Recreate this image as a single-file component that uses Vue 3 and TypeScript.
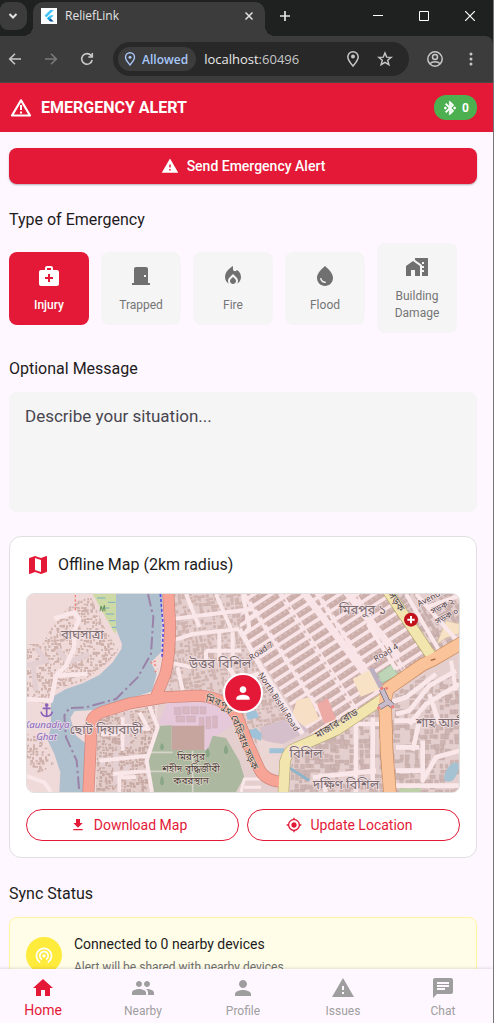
<script setup lang="ts">
import { ref } from 'vue'

const icons = {
  warning: 'M1 21h22L12 2 1 21zm12-3h-2v-2h2v2zm0-4h-2v-4h2v4z',
  bluetooth:
    'M7 12l-2-2-2 2 2 2 2-2zm10.71-4.29L12 2h-1v7.59L6.41 5 5 6.41 10.59 12 5 17.59 6.41 19 11 14.41V22h1l5.71-5.71-4.3-4.29 4.3-4.29zM13 5.83l1.88 1.88L13 9.59V5.83zm1.88 10.46L13 18.17v-3.76l1.88 1.88zM19 10l-2 2 2 2 2-2-2-2z',
  medical:
    'M20 6h-4V4c0-1.1-.9-2-2-2h-4c-1.1 0-2 .9-2 2v2H4c-1.1 0-2 .9-2 2v12c0 1.1.9 2 2 2h16c1.1 0 2-.9 2-2V8c0-1.1-.9-2-2-2zM10 4h4v2h-4V4zm6 11h-3v3h-2v-3H8v-2h3v-3h2v3h3v2z',
  door: 'M19 19V5c0-1.1-.9-2-2-2H7c-1.1 0-2 .9-2 2v14H3v2h18v-2h-2zm-2-6h-2v-2h2v2z',
  fire: 'M12 12.9l-2.13 2.09C9.31 15.55 9 16.28 9 17.06 9 18.68 10.35 20 12 20s3-1.32 3-2.94c0-.78-.31-1.52-.87-2.07L12 12.9z M16 6l-.44.55C14.38 8.02 12 7.19 12 5.3V2S4 6 4 13c0 2.92 1.56 5.47 3.89 6.86-.56-.79-.89-1.76-.89-2.8 0-1.32.52-2.56 1.47-3.5L12 10.1l3.53 3.47c.95.93 1.47 2.17 1.47 3.5 0 1.02-.31 1.96-.85 2.75 1.89-1.15 3.29-3.06 3.71-5.3.66-3.55-1.07-6.9-3.86-8.52z',
  drop: 'M12 2c-5.33 4.55-8 8.48-8 11.8 0 4.98 3.8 8.2 8 8.2s8-3.22 8-8.2c0-3.32-2.67-7.25-8-11.8zm-4.17 12c.37 0 .67.26.74.62.41 2.22 2.28 2.98 3.64 2.87.43-.02.79.32.79.75 0 .4-.32.73-.72.75-2.13.13-4.62-1.09-5.19-4.12-.08-.45.28-.87.74-.87z',
  building: 'M1 11v10h5v-6h4v6h5V11L8 6z M10 3v1.97l7 5V11h2v2h-2v2h2v2h-2v4h6V3H10zm9 6h-2V7h2v2z',
  map: 'M20.5 3l-.16.03L15 5.1 9 3 3.36 4.9c-.21.07-.36.25-.36.48V20.5c0 .28.22.5.5.5l.16-.03L9 18.9l6 2.1 5.64-1.9c.21-.07.36-.25.36-.48V3.5c0-.28-.22-.5-.5-.5zM15 19l-6-2.11V5l6 2.11V19z',
  person: 'M12 12c2.21 0 4-1.79 4-4s-1.79-4-4-4-4 1.79-4 4 1.79 4 4 4zm0 2c-2.67 0-8 1.34-8 4v2h16v-2c0-2.66-5.33-4-8-4z',
  download: 'M19 9h-4V3H9v6H5l7 7 7-7zM5 18v2h14v-2H5z',
  locate:
    'M12 8c-2.21 0-4 1.79-4 4s1.79 4 4 4 4-1.79 4-4-1.79-4-4-4zm8.94 3c-.46-4.17-3.77-7.48-7.94-7.94V1h-2v2.06C6.83 3.52 3.52 6.83 3.06 11H1v2h2.06c.46 4.17 3.77 7.48 7.94 7.94V23h2v-2.06c4.17-.46 7.48-3.77 7.94-7.94H23v-2h-2.06zM12 19c-3.87 0-7-3.13-7-7s3.13-7 7-7 7 3.13 7 7-3.13 7-7 7z',
  tethering:
    'M12 11c-1.1 0-2 .9-2 2s.9 2 2 2 2-.9 2-2-.9-2-2-2zm6 2c0-3.31-2.69-6-6-6s-6 2.69-6 6c0 2.22 1.21 4.15 3 5.19l1-1.74c-1.19-.7-2-1.97-2-3.45 0-2.21 1.79-4 4-4s4 1.79 4 4c0 1.48-.81 2.75-2 3.45l1 1.74c1.79-1.04 3-2.97 3-5.19zM12 3C6.48 3 2 7.48 2 13c0 3.7 2.01 6.92 4.99 8.65l1-1.73C5.61 18.53 4 15.96 4 13c0-4.42 3.58-8 8-8s8 3.58 8 8c0 2.96-1.61 5.53-4 6.92l1 1.73c2.99-1.73 5-4.95 5-8.65 0-5.52-4.48-10-10-10z',
  home: 'M10 20v-6h4v6h5v-8h3L12 3 2 12h3v8z',
  people:
    'M16 11c1.66 0 2.99-1.34 2.99-3S17.66 5 16 5c-1.66 0-3 1.34-3 3s1.34 3 3 3zm-8 0c1.66 0 2.99-1.34 2.99-3S9.66 5 8 5C6.34 5 5 6.34 5 8s1.34 3 3 3zm0 2c-2.33 0-7 1.17-7 3.5V19h14v-2.5c0-2.33-4.67-3.5-7-3.5zm8 0c-.29 0-.62.02-.97.05 1.16.84 1.97 1.97 1.97 3.45V19h6v-2.5c0-2.33-4.67-3.5-7-3.5z',
  chat: 'M20 2H4c-1.1 0-1.99.9-1.99 2L2 22l4-4h14c1.1 0 2-.9 2-2V4c0-1.1-.9-2-2-2zM6 9h12v2H6V9zm8 5H6v-2h8v2zm4-6H6V6h12v2z',
}

interface Entry {
  label: string
  icon: string
}

const kinds: Entry[] = [
  { label: 'Injury', icon: icons.medical },
  { label: 'Trapped', icon: icons.door },
  { label: 'Fire', icon: icons.fire },
  { label: 'Flood', icon: icons.drop },
  { label: 'Building Damage', icon: icons.building },
]
const selectedKind = ref('Injury')
const message = ref('')

const tabs: Entry[] = [
  { label: 'Home', icon: icons.home },
  { label: 'Nearby', icon: icons.people },
  { label: 'Profile', icon: icons.person },
  { label: 'Issues', icon: icons.warning },
  { label: 'Chat', icon: icons.chat },
]
const activeTab = ref('Home')

// Deterministic scatter of small building footprints, returned as one path.
function scatter(seed: number, x0: number, y0: number, x1: number, y1: number, step: number, density: number): string {
  let s = seed
  const rnd = () => {
    s = (s * 16807) % 2147483647
    return s / 2147483647
  }
  let d = ''
  for (let y = y0; y < y1; y += step) {
    for (let x = x0; x < x1; x += step) {
      if (rnd() > density) continue
      const w = Math.round(step * (0.5 + rnd() * 0.6))
      const h = Math.round(step * (0.5 + rnd() * 0.6))
      d += `M${x + Math.round(rnd() * 4)} ${y + Math.round(rnd() * 4)}h${w}v${h}h${-w}z`
    }
  }
  return d
}

// Regular city blocks: long thin bars separated by narrow streets.
function blocks(x0: number, y0: number, x1: number, y1: number, w: number, h: number, gapX: number, gapY: number): string {
  let d = ''
  for (let x = x0; x < x1; x += w + gapX) {
    for (let y = y0; y < y1; y += h + gapY) d += `M${x} ${y}h${w}v${h}h${-w}z`
  }
  return d
}

const westBuildings = scatter(11, 0, 0, 300, 560, 9, 0.62)
const southBuildings = scatter(29, 200, 320, 400, 600, 9, 0.74)
const northBuildings = scatter(47, 420, -20, 900, 460, 12, 0.72)
const eastBuildings = scatter(83, 760, 240, 1310, 600, 15, 0.7)
const cornerBuildings = scatter(61, 1080, -20, 1310, 300, 15, 0.72)
const gridBlocks = blocks(-700, -700, 800, 700, 78, 17, 15, 11)
const gridDetail = blocks(-700, -700, 800, 700, 8, 8, 9, 20)
</script>

<template>
  <div class="window">
    <div class="tabstrip">
      <button class="tab-search" aria-label="Search tabs">
        <svg width="10" height="10" viewBox="0 0 10 10"><path d="M1.5 3L5 6.500 8.500 3" fill="none" stroke="currentColor" stroke-width="2" /></svg>
      </button>
      <div class="tab">
        <svg class="favicon" width="16" height="16" viewBox="0 0 16 16">
          <rect width="16" height="16" fill="#fff" />
          <path d="M9.200 2h3.600L5.400 9.400 3.600 7.600z" fill="#47c5fb" />
          <path d="M9.200 7.200h3.600L9.600 10.400 7.800 8.600z" fill="#47c5fb" />
          <path d="M6 10.400l1.800-1.800 1.800 1.800-1.800 1.800z" fill="#00a8ee" />
          <path d="M7.800 12.200l1.800-1.800 3.200 3.200H9.200z" fill="#0b5394" />
        </svg>
        <span class="tab-title">ReliefLink</span>
        <button class="bare" aria-label="Close tab">
          <svg width="8" height="8" viewBox="0 0 8 8"><path d="M.5.5l7 7M7.500.5l-7 7" stroke="currentColor" stroke-width="1.500" /></svg>
        </button>
      </div>
      <button class="bare new-tab" aria-label="New tab">
        <svg width="12" height="12" viewBox="0 0 12 12"><path d="M6 1v10M1 6h10" stroke="currentColor" stroke-width="1.700" /></svg>
      </button>
      <div class="window-controls">
        <button class="bare" aria-label="Minimize"><svg width="10" height="10" viewBox="0 0 10 10"><path d="M0 4.500h10" stroke="currentColor" /></svg></button>
        <button class="bare" aria-label="Maximize"><svg width="10" height="10" viewBox="0 0 10 10"><path d="M.5.5h9v9h-9z" fill="none" stroke="currentColor" /></svg></button>
        <button class="bare" aria-label="Close"><svg width="10" height="10" viewBox="0 0 10 10"><path d="M0 0l10 10M10 0L0 10" stroke="currentColor" stroke-width="1.200" /></svg></button>
      </div>
    </div>

    <div class="toolbar">
      <div class="nav-buttons">
        <button class="bare" aria-label="Back"><svg width="16" height="16" viewBox="0 0 16 16"><path d="M14 8H3M8 2.700L2.700 8 8 13.300" fill="none" stroke="currentColor" stroke-width="1.600" /></svg></button>
        <button class="bare dim" aria-label="Forward"><svg width="16" height="16" viewBox="0 0 16 16"><path d="M2 8h11M8 2.700L13.300 8 8 13.300" fill="none" stroke="currentColor" stroke-width="1.600" /></svg></button>
        <button class="bare" aria-label="Reload"><svg width="16" height="16" viewBox="0 0 16 16"><path d="M13.200 9A5.300 5.300 0 1 1 12 4.400l1.200 1.300M13.300 2v4h-4" fill="none" stroke="currentColor" stroke-width="1.600" /></svg></button>
      </div>
      <div class="omnibox">
        <button class="chip">
          <svg width="12" height="14" viewBox="0 0 12 14"><path d="M6 13C3.500 10 1.500 7.800 1.500 5.300a4.500 4.500 0 0 1 9 0C10.500 7.800 8.500 10 6 13z" fill="none" stroke="currentColor" stroke-width="1.400" /><circle cx="6" cy="5.300" r="1.500" fill="currentColor" /></svg>
          Allowed
        </button>
        <span class="url">localhost<span class="port">:60496</span></span>
        <button class="bare" aria-label="Location access"><svg width="16" height="18" viewBox="0 0 16 18"><path d="M8 16C5 12.500 2.800 10.100 2.800 7a5.200 5.200 0 0 1 10.400 0c0 3.100-2.200 5.500-5.200 9z" fill="none" stroke="currentColor" stroke-width="1.500" /><circle cx="8" cy="6.500" r="2" fill="currentColor" /></svg></button>
        <button class="bare" aria-label="Bookmark"><svg width="16" height="16" viewBox="0 0 16 16"><path d="M8 1.900l1.700 4.200 4.500.3-3.500 2.900 1.200 4.400L8 11.300l-3.900 2.400 1.200-4.400-3.500-2.900 4.500-.3z" fill="none" stroke="currentColor" stroke-width="1.400" /></svg></button>
      </div>
      <button class="bare profile" aria-label="Profile"><svg width="18" height="18" viewBox="0 0 18 18"><g fill="none" stroke="currentColor" stroke-width="1.500"><circle cx="9" cy="9" r="7.200" /><circle cx="9" cy="7" r="2.500" /><path d="M3.800 13.800c2.600-2.600 7.800-2.600 10.400 0" /></g></svg></button>
      <button class="bare" aria-label="Menu"><svg width="4" height="16" viewBox="0 0 4 16" fill="currentColor"><circle cx="2" cy="3" r="1.500" /><circle cx="2" cy="8" r="1.500" /><circle cx="2" cy="13" r="1.500" /></svg></button>
    </div>

    <div class="viewport">
      <div class="app">
        <header class="appbar">
          <svg width="24" height="24" viewBox="0 0 24 24" fill="currentColor"><path d="M12 4.300L21 19.500H3z" fill="none" stroke="currentColor" stroke-width="2.200" stroke-linejoin="round" /><path d="M11 9h2v5h-2zM11 15.500h2v2h-2z" /></svg>
          <h1>EMERGENCY ALERT</h1>
          <span class="badge"><svg width="16" height="16" viewBox="0 0 24 24" fill="currentColor"><path :d="icons.bluetooth" stroke="currentColor" /></svg>0</span>
        </header>

        <main class="content">
          <button class="send">
            <svg width="18" height="18" viewBox="0 0 24 24" fill="currentColor"><path :d="icons.warning" /></svg>
            Send Emergency Alert
          </button>

          <h2>Type of Emergency</h2>
          <div class="kinds">
            <button
              v-for="kind in kinds"
              :key="kind.label"
              class="kind"
              :class="{ selected: kind.label === selectedKind }"
              :aria-pressed="kind.label === selectedKind"
              @click="selectedKind = kind.label"
            >
              <svg width="24" height="24" viewBox="0 0 24 24" fill="currentColor"><path :d="kind.icon" /></svg>
              <span>{{ kind.label }}</span>
            </button>
          </div>

          <h2><label for="message">Optional Message</label></h2>
          <textarea id="message" v-model="message" placeholder="Describe your situation..."></textarea>

          <section class="map-card">
            <h3>
              <svg width="24" height="24" viewBox="0 0 24 24" fill="currentColor"><path :d="icons.map" /></svg>
              Offline Map (2km radius)
            </h3>
            <div class="map">
              <svg class="tiles" viewBox="3 0 1296 594" preserveAspectRatio="xMidYMid slice" role="img" aria-label="Map of the surrounding area">
                <defs>
                  <clipPath id="west"><path d="M150 20L195 10 240 110 278 170 235 215 170 262 90 285 60 330 0 320V150L50 150 90 75zM0 420L50 430 85 510 40 540 0 500z" /></clipPath>
                  <clipPath id="south"><path d="M215 372L385 335 392 400 362 500 375 594H210z" /></clipPath>
                  <clipPath id="north"><path d="M440 0H700L705 120 660 140 740 300 830 410 770 450 690 450 640 350 560 290H425z" /></clipPath>
                  <clipPath id="grid"><path d="M655 -10H1080L1215 190 1070 290 950 395 850 420 640 100z" /></clipPath>
                  <clipPath id="southeast"><path d="M790 594L800 480 1070 320 1300 180V594z" /></clipPath>
                  <clipPath id="corner"><path d="M1110 0H1302V140L1230 180z" /></clipPath>
                  <path id="embankment" d="M519 320C575 328 605 345 620 385S655 480 688 545" />
                </defs>

                <rect width="1302" height="600" fill="#f0dad9" />
                <path d="M437 0H1302V594H380L395 330 430 250z" fill="#e4cfce" />
                <path d="M200 0H270V120L262 112z" fill="#cddaa6" />
                <path d="M213 12h25M246 25h22M225 42h25M240 60h24M250 80h18M258 100h12" stroke="#78acc5" stroke-width="3" />
                <path d="M222 52l3-16 5 16 5-18 2 18" stroke="#679258" stroke-width="3" fill="none" />
                <path d="M270 0H410L405 175 375 205 392 240 378 292 320 312 262 327 200 348 145 352 133 372 150 425 182 450 182 594H100L103 535 85 480 66 440 74 400 75 330 85 305 120 285 170 268 220 243 260 205 286 165 288 150 270 105z" fill="#aebfce" />

                <g clip-path="url(#west)"><path :d="westBuildings" fill="#cfb2ac" /></g>
                <g clip-path="url(#south)"><rect x="190" y="320" width="220" height="280" fill="#e3cdca" /><path :d="southBuildings" fill="#c8aaa5" /></g>
                <g clip-path="url(#north)"><path :d="northBuildings" fill="#cfb4b0" transform="rotate(-8 600 200)" /></g>
                <g clip-path="url(#southeast)"><path :d="eastBuildings" fill="#cdb4b1" stroke="#c0a6a4" stroke-width="1" /></g>
                <g clip-path="url(#corner)"><path :d="cornerBuildings" fill="#cbb1ae" stroke="#bfa5a3" stroke-width="1" transform="rotate(-30 1200 100)" /></g>

                <g clip-path="url(#grid)">
                  <rect x="600" y="-10" width="700" height="500" fill="#f9e4e8" />
                  <g transform="translate(850 200) rotate(-33)"><path :d="gridBlocks" fill="#ccaeaa" /><path :d="gridDetail" fill="#d6bdba" /></g>
                  <path d="M830 -10L1060 295M950 -20L1120 190" stroke="#f9e4e8" stroke-width="22" />
                </g>
                <path d="M812 318L850 310 880 375 830 400 800 360z" fill="#f6dfc4" />
                <path d="M800 370L850 410 770 450 725 470 700 400z" fill="#d4bfca" />
                <path d="M980 255L1030 228 1062 285 1005 308z" fill="#f8e2c6" />
                <path d="M1055 240L1098 210 1116 243 1068 267z" fill="#bfd5b7" stroke="#96b48f" stroke-width="2" />
                <path d="M873 330L905 312 930 375 895 390z" fill="#eda9a4" />
                <path d="M1232 150L1260 80 1300 90V118L1260 132z" fill="#f8e2c6" stroke="#d6c3a3" stroke-width="2" />

                <path d="M425 325H590L625 390 570 425 550 470H437V395L395 390z" fill="#e5c8da" />
                <g fill="#d8b6c2" stroke="#c3a3ae" stroke-width="1">
                  <path d="M445 340h20v22h-20zM470 338h20v22h-20zM495 338h22v22h-22zM522 338h18v22h-18zM450 366h26v18h-26zM482 366h26v18h-26zM520 370h14v36h-14zM540 368h14v36h-14zM560 366h14v36h-14z" />
                </g>
                <path d="M395 396L437 394V468H545L560 425 600 432 640 500 655 550 630 594H375L362 520z" fill="#adb8a0" />
                <path d="M437 395h98v73h-98z" fill="#c5a59e" />
                <path d="M370 475H440M362 532H455M500 470V594" stroke="#d6d3c8" stroke-width="5" />
                <path d="M408 468c-10-2-4-18 0-20 4 2 10 18 0 20zM408 574c-10-2-4-26 0-28 4 2 10 26 0 28zM600 480c-12-2-4-24 0-28 4 4 12 26 0 28zM545 490c-12-2-4-24 0-28 4 4 12 26 0 28z" fill="#88a586" />
                <path d="M690 432L735 445 770 450 775 505 745 560 712 520z" fill="#ecd6d3" />
                <path d="M660 350L690 350 700 370 665 378zM667 410L690 402 708 420 705 440 675 430zM730 463h44v15h-44z" fill="#9fc2d8" />
                <path d="M780 515L850 560" stroke="#8bb5cd" stroke-width="8" />
                <path d="M1255 548c5-30 30-50 40-40s-5 50-20 54-25-5-20-14z" fill="#a4c2d2" />
                <path d="M1120 583h64v14h-64z" fill="#bdd0a8" />

                <g fill="none" stroke="#e4d0d2" stroke-width="16">
                  <path d="M0 215L60 200 30 160M20 210L30 290M95 165L125 205 190 180" />
                  <path d="M230 490V520M270 470V560L310 515M305 350V460" />
                </g>
                <g fill="none" stroke="#fae7ea" stroke-width="12" stroke-linejoin="round">
                  <path d="M85 74L145 55 160 75 145 110V160L120 215 90 245 75 320 0 315M90 245L185 240" stroke-width="14" />
                  <path d="M0 545L55 565 75 594" />
                  <path d="M225 420H270L300 395 365 405M290 370V470M340 355L370 410M220 500L365 485M260 540L370 530M280 594V550H330M370 335L395 400 362 500 378 594" />
                  <path d="M440 140L500 120 640 105M440 75L680 45M480 0L520 100M570 0L615 105M650 0L670 100 655 120M430 205L500 220M455 220L470 290M540 170H645M540 170V205M580 115V205M620 115V205" />
                  <path d="M640 105L705 220 830 420M590 190L640 270M700 240L650 255M700 55L660 80" stroke-width="15" />
                  <path d="M645 594L655 555H740M655 580H705" stroke-width="9" />
                  <path d="M990 390V594M1040 370V560M985 390H1060M1105 380H1180L1160 470M1110 460H1180M1190 440V560L1230 490 1300 470M1110 530H1190M860 550L1050 530M900 594L880 540M1110 360L1150 350 1210 275 1290 230M1150 390L1200 330 1300 270M1080 330L1140 310 1230 240M1210 300L1240 390M1110 575H1300" stroke-width="14" />
                  <path d="M1140 0L1240 170M1170 0L1302 150M1200 40L1300 5M1275 200L1290 290" />
                  <path d="M1025 90L1110 225" />
                </g>

                <g fill="none" stroke-linejoin="round">
                  <path d="M187 600L194 453 195 395Q195 365 232 353L312 328 417 310 517 305Q590 308 632 363L667 453 700 525Q715 560 772 565M427 0L432 90Q432 190 417 243L387 315" stroke="#cf857c" stroke-width="36" />
                  <path d="M772 600L777 503Q785 470 807 463L932 408 1075 312M1085 -10L1222 195" stroke="#b8a978" stroke-width="34" />
                  <path d="M1092 600L1082 473 1077 318 1085 285 1190 212 1222 197 1310 145" stroke="#c98b5d" stroke-width="40" />
                  <path d="M187 600L194 453 195 395Q195 365 232 353L312 328 417 310 517 305Q590 308 632 363L667 453 700 525Q715 560 772 565M427 0L432 90Q432 190 417 243L387 315" stroke="#f7a395" stroke-width="32" stroke-linecap="round" />
                  <path d="M772 600L777 503Q785 470 807 463L932 408 1075 312M1085 -10L1222 195" stroke="#f2e5ad" stroke-width="30" />
                  <path d="M1092 600L1082 473 1077 318 1085 285 1190 212 1222 197 1310 145" stroke="#fac399" stroke-width="36" />
                  <path d="M403 0L412 100 408 190" stroke="#5a4fe0" stroke-width="5" stroke-dasharray="9 6" />
                  <path d="M366 0L382 70 375 180 335 250 270 315 180 340 130 342 115 365 120 430 152 500 160 594" stroke="#9a83a8" stroke-width="6" stroke-dasharray="38 10 7 10" />
                  <path d="M1035 222L1065 280" stroke="#bbb0c2" stroke-width="14" />
                  <path d="M1067 285L1085 325L1060 340M1085 322L1100 336" stroke="#6b6376" stroke-width="17" />
                  <path d="M1067 285L1085 325L1060 340M1085 322L1100 336" stroke="#c9bcca" stroke-width="13" />
                  <path d="M148 3V50M390 215l-15-10 15-4M386 235l10-10" stroke="#f08478" stroke-width="4" stroke-dasharray="7 6" />
                  <path d="M1214 199l14-4" stroke="#a76a43" stroke-width="4" />
                </g>
                <g fill="#ef7f7f"><circle cx="1058" cy="342" r="5" /><circle cx="1100" cy="338" r="5" /><circle cx="1067" cy="283" r="5" /><circle cx="1082" cy="283" r="4" /></g>

                <g fill="none" stroke="#8a63b8" stroke-width="5"><path d="M62 336V367M50 343H74M45 353Q48 367 62 367T79 353" /><circle cx="62" cy="333" r="3" /></g>
                <circle cx="1155" cy="77" r="21" fill="#c2121c" />
                <path d="M1155 66v22M1144 77h22" stroke="#fff" stroke-width="6" />

                <g class="place">
                  <text x="169" y="136">বাঘসাত্রা</text>
                  <text x="240" y="420">ছোট দিয়াবাড়ী</text>
                  <text x="582" y="221">উত্তর বিশিল</text>
                  <text x="1010" y="60">মিরপুর ১</text>
                  <text x="840" y="492">বিশিল</text>
                  <text x="960" y="584">দক্ষিণ বিশিল</text>
                  <text x="1246" y="400">শাহ আলী</text>
                </g>
                <g class="dark">
                  <text x="495" y="499">মিরপুর</text>
                  <text x="495" y="534">শহীদ বুদ্ধিজীবী</text>
                  <text x="495" y="570">কবরস্থান</text>
                  <text transform="translate(936 397) rotate(-31)">মাজার রোড</text>
                  <text transform="translate(1103 28) rotate(57)">সড়ক</text>
                  <text><textPath href="#embankment" startOffset="50%">মিরপুর বেড়িবাধ সড়ক</textPath></text>
                </g>
                <g class="street">
                  <text transform="translate(710 178) rotate(-33)">Road 7</text>
                  <text transform="translate(751 328) rotate(57)">North Bishil Road</text>
                  <text transform="translate(1084 183) rotate(-31)">Road 4</text>
                  <text transform="translate(1218 18) rotate(-28)">Avenue</text>
                  <text transform="translate(1253 44) rotate(-28)">সড়ক ২</text>
                  <text transform="translate(1266 74) rotate(-28)">সড়ক ০</text>
                </g>
                <g class="ferry">
                  <text x="62" y="403">Kaunadiya</text>
                  <text x="62" y="437">Ghat</text>
                </g>
              </svg>
              <span class="marker"><svg width="20" height="20" viewBox="0 0 24 24" fill="currentColor"><path :d="icons.person" /></svg></span>
            </div>
            <div class="map-actions">
              <button><svg width="16" height="16" viewBox="0 0 24 24" fill="currentColor"><path :d="icons.download" /></svg>Download Map</button>
              <button><svg width="16" height="16" viewBox="0 0 24 24" fill="currentColor"><path :d="icons.locate" /></svg>Update Location</button>
            </div>
          </section>

          <h2>Sync Status</h2>
          <section class="sync">
            <span class="sync-icon"><svg width="20" height="20" viewBox="0 0 24 24" fill="currentColor"><path :d="icons.tethering" /></svg></span>
            <div>
              <p class="sync-title">Connected to 0 nearby devices</p>
              <p class="sync-note">Alert will be shared with nearby devices</p>
            </div>
          </section>
        </main>

        <nav class="bottom">
          <button
            v-for="tab in tabs"
            :key="tab.label"
            :class="{ active: tab.label === activeTab }"
            @click="activeTab = tab.label"
          >
            <svg width="24" height="24" viewBox="0 0 24 24" fill="currentColor"><path :d="tab.icon" /></svg>
            <span>{{ tab.label }}</span>
          </button>
        </nav>
      </div>
    </div>
  </div>
</template>

<style>
body {
  background: #fef7ff;
}
</style>

<style scoped>
* {
  box-sizing: border-box;
}
button {
  font: inherit;
  border: 0;
  cursor: pointer;
}
svg {
  display: block;
  flex: none;
}
h1,
h2,
h3,
p {
  margin: 0;
  font-weight: 400;
}
.window {
  display: flex;
  flex-direction: column;
  height: 100vh;
  border-right: 1px solid #777;
  overflow: hidden;
  background: #1f2120;
  font-family: Roboto, "Noto Sans", sans-serif;
}

/* Browser chrome */
.bare {
  display: flex;
  align-items: center;
  justify-content: center;
  padding: 0;
  background: none;
  color: inherit;
}
.tabstrip {
  display: flex;
  flex: none;
  height: 36px;
  color: #e3e3e3;
  font-family: "Open Sans", "Noto Sans", sans-serif;
}
.tab-search {
  display: flex;
  align-items: center;
  justify-content: center;
  width: 27px;
  height: 28px;
  margin: 2px 6px 0 0;
  padding: 0 1px 0 0;
  border-radius: 8px 10px 10px 8px;
  background: #3c3c3c;
  color: #e3e3e3;
}
.tab {
  position: relative;
  display: flex;
  align-items: center;
  gap: 8px;
  width: 232px;
  margin-top: 2px;
  padding: 0 12px 6px 8px;
  border-radius: 10px 10px 0 0;
  background: #3c3c3c;
}
.tab::before,
.tab::after {
  content: "";
  position: absolute;
  bottom: 0;
  width: 10px;
  height: 10px;
}
.tab::before {
  right: 100%;
  background: radial-gradient(circle at 0 0, transparent 10px, #3c3c3c 10px);
}
.tab::after {
  left: 100%;
  background: radial-gradient(circle at 100% 0, transparent 10px, #3c3c3c 10px);
}
.tab-title {
  flex: 1;
  font-size: 12px;
  line-height: 16px;
}
.new-tab {
  width: 40px;
  padding-bottom: 4px;
}
.window-controls {
  display: flex;
  gap: 36px;
  margin-left: auto;
  padding: 0 18px 4px 0;
  color: #fff;
}
.toolbar {
  display: flex;
  flex: none;
  align-items: center;
  height: 47px;
  padding: 0 20px 0 7px;
  border-bottom: 1px solid #4a4747;
  border-radius: 0 8px 0 0;
  background: #3c3c3c;
  color: #c7c7c7;
}
.nav-buttons {
  display: flex;
  gap: 20px;
  margin-right: 18px;
}
.dim {
  color: #7a7a7a;
}
.omnibox {
  display: flex;
  flex: 1;
  align-items: center;
  gap: 16px;
  height: 34px;
  padding: 0 16px 0 5px;
  border-radius: 17px;
  background: #282828;
  font-family: "Open Sans", "Noto Sans", sans-serif;
}
.chip {
  display: flex;
  align-items: center;
  gap: 6px;
  height: 24px;
  margin-right: -8px;
  padding: 0 8px 0 6px;
  border-radius: 12px;
  background: #3c3c3c;
  color: #a8c7fa;
  font-size: 12px;
  font-weight: 600;
}
.url {
  flex: 1;
  color: #e8e8e8;
  font-size: 13px;
}
.port {
  color: #c7c7c7;
}
.profile {
  margin: 0 25px 0 17px;
}

/* App shell: the page is panned seven pixels to the left inside the window */
.viewport {
  flex: 1;
  min-height: 0;
  overflow: hidden;
  background: #fef7ff;
}
.app {
  display: flex;
  flex-direction: column;
  height: 100%;
  margin-left: -7px;
  color: #1d1b20;
}
.appbar {
  display: flex;
  flex: none;
  align-items: center;
  gap: 8px;
  height: 49px;
  padding: 0 16px;
  background: #e31937;
  color: #fff;
}
.appbar h1 {
  flex: 1;
  font-size: 16px;
  font-weight: 700;
}
.badge {
  display: flex;
  align-items: center;
  gap: 4px;
  height: 25px;
  padding: 0 8px;
  border-radius: 12px;
  background: #4caf50;
  font-size: 12px;
  font-weight: 700;
}
.content {
  flex: 1;
  min-height: 0;
  padding: 16px 16px 0;
  overflow-y: auto;
  scrollbar-width: none;
}
.content h2 {
  margin: 24px 0 12px;
  font-size: 16px;
  line-height: 23px;
}
.send {
  display: flex;
  align-items: center;
  justify-content: center;
  gap: 8px;
  width: 100%;
  height: 36px;
  border-radius: 8px;
  background: #e31937;
  box-shadow: 0 1px 2px rgba(0, 0, 0, 0.3);
  color: #fff;
  font-size: 14px;
  font-weight: 500;
}
.kinds {
  display: flex;
  align-items: center;
  gap: 12px;
}
.kind {
  display: flex;
  flex-direction: column;
  align-items: center;
  gap: 9px;
  width: 80px;
  padding: 12px 8px 11px;
  border-radius: 8px;
  background: #f5f5f5;
  color: #757575;
  font-size: 12px;
  line-height: 17px;
}
.kind svg {
  color: #707070;
}
.kind.selected,
.kind.selected svg {
  background: #e31937;
  color: #fff;
  font-weight: 500;
}
textarea {
  display: block;
  width: 100%;
  height: 120px;
  padding: 12px 16px;
  border: 0;
  border-radius: 8px;
  background: #f5f5f5;
  color: #1d1b20;
  font: 17px/24px Roboto, "Noto Sans", sans-serif;
  resize: none;
}
textarea::placeholder {
  color: #49454f;
  opacity: 1;
}
.map-card {
  margin-top: 24px;
  padding: 16px;
  border: 1px solid #e0e0e0;
  border-radius: 12px;
  background: #fff;
}
.map-card h3 {
  display: flex;
  align-items: center;
  gap: 8px;
  color: #1d1b20;
  font-size: 16px;
  line-height: 24px;
}
.map-card h3 svg {
  color: #e31937;
}
.map {
  position: relative;
  height: 200px;
  margin: 16px 0;
  border: 1px solid #e0e0e0;
  border-radius: 8px;
  overflow: hidden;
}
.tiles {
  width: 100%;
  height: 100%;
}
.tiles text {
  text-anchor: middle;
  paint-order: stroke;
  stroke-linejoin: round;
  font-family: "Noto Sans", "Noto Sans Bengali", sans-serif;
}
.place text {
  fill: #7c6b70;
  stroke: #f3e3e5;
  stroke-width: 5px;
  font-size: 39px;
}
.dark text {
  fill: #4a3d3d;
  stroke: #efe3d5;
  stroke-width: 3px;
  font-size: 30px;
}
.street text {
  fill: #4f4347;
  stroke: #fae7ea;
  stroke-width: 4px;
  font-size: 25px;
}
.ferry text {
  fill: #8a63b8;
  stroke: #eadfe8;
  stroke-width: 4px;
  font-size: 29px;
  font-style: italic;
}
.marker {
  position: absolute;
  top: 50%;
  left: 50%;
  display: flex;
  align-items: center;
  justify-content: center;
  width: 40px;
  height: 40px;
  border: 2px solid #fff;
  border-radius: 50%;
  background: #e31937;
  color: #fff;
  transform: translate(-50%, -50%);
}
.map-actions {
  display: flex;
  gap: 8px;
}
.map-actions button {
  display: flex;
  flex: 1;
  align-items: center;
  justify-content: center;
  gap: 8px;
  height: 32px;
  padding: 0 16px 0 8px;
  border: 1px solid #e31937;
  border-radius: 16px;
  background: #fff;
  color: #e31937;
  font-size: 14px;
}
.sync {
  display: flex;
  align-items: center;
  gap: 12px;
  padding: 16px;
  border: 1px solid #fff59d;
  border-radius: 8px;
  background: #fffde7;
}
.sync-icon {
  display: flex;
  align-items: center;
  justify-content: center;
  width: 36px;
  height: 36px;
  border-radius: 50%;
  background: #ffeb3b;
  color: #fff;
}
.sync-title {
  font-size: 14px;
  line-height: 20px;
}
.sync-note {
  margin-top: 5px;
  color: #707070;
  font-size: 12px;
  line-height: 17px;
}
.bottom {
  position: relative;
  display: grid;
  flex: none;
  grid-template-columns: repeat(5, 1fr);
  height: 54px;
  background: #fef7ff;
  box-shadow: 0 -1px 3px rgba(0, 0, 0, 0.12);
}
.bottom button {
  display: flex;
  flex-direction: column;
  align-items: center;
  justify-content: space-between;
  padding: 7px 0 3px;
  background: none;
  color: #9e9e9e;
  font-size: 12px;
  line-height: 17px;
}
.bottom .active {
  color: #e31937;
  font-size: 14px;
  line-height: 20px;
}
</style>
